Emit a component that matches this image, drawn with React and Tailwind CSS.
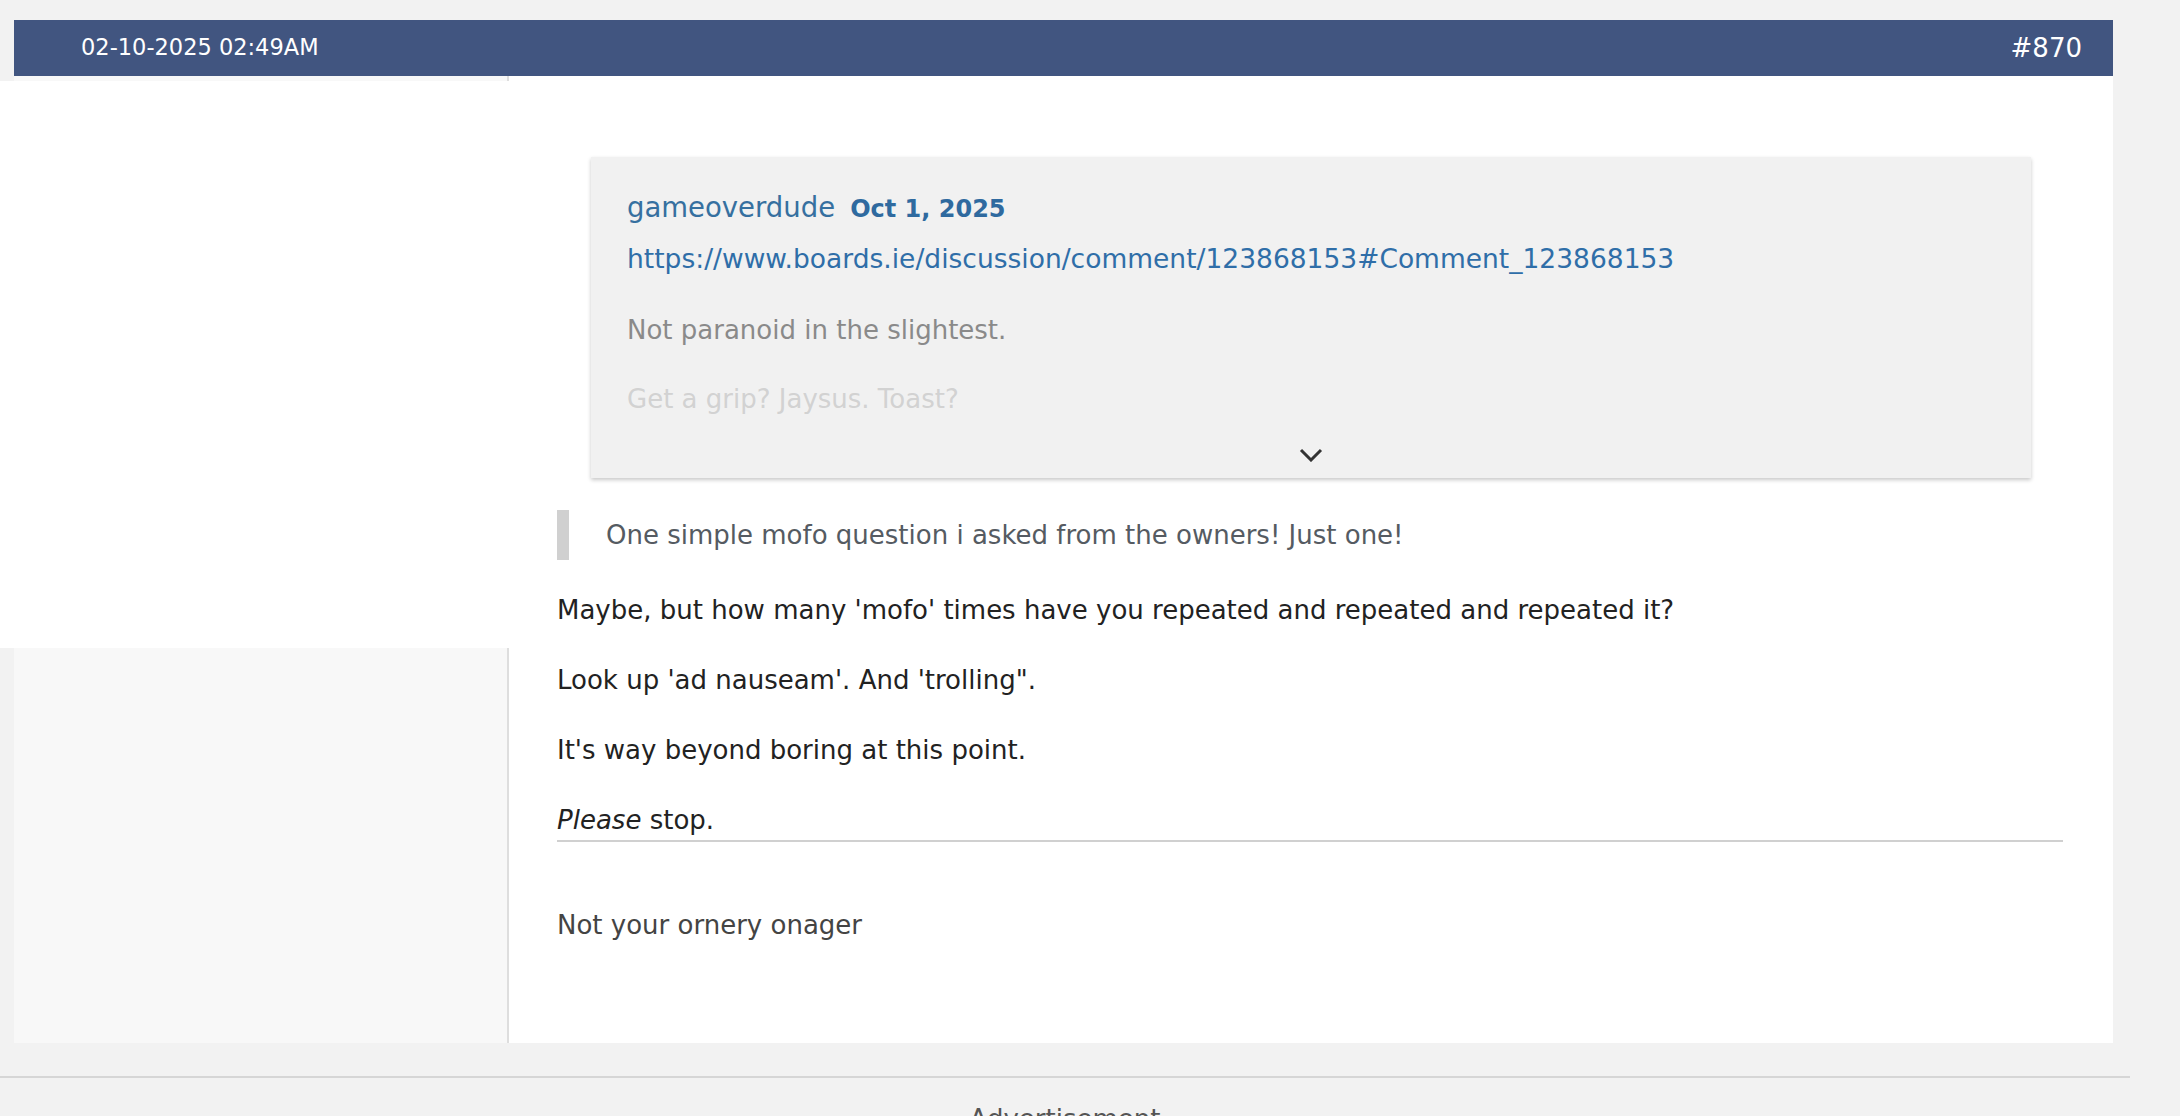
export default function App() {
  return (
    <div className="relative h-[1116px] overflow-hidden bg-[#f2f2f2] pt-[20px] font-['DejaVu_Sans',Verdana,sans-serif]">
      <div className="ml-[14px] w-[2099px]">
        <div className="flex h-[56px] items-center justify-between bg-[#415580] pl-[67px] pr-[31px] text-white">
          <span className="text-[22.5px]">02-10-2025 02:49AM</span>
          <span className="text-[26px]">#870</span>
        </div>
        <div className="flex">
          <div className="w-[495px] shrink-0 border-r-2 border-[#dedede] bg-[#f8f8f8]" />
          <div className="flex-1 bg-white pb-[100px] pl-[48px] pr-[50px] pt-[81px] text-[26px] leading-[36px]">
            <div className="ml-[34px] mr-[32px] bg-[#f1f1f1] px-[36px] pb-[16px] pt-[32px] shadow-[0_2px_4px_rgba(0,0,0,0.22)]">
              <div className="flex items-baseline">
                <span className="text-[27.5px] text-[#3670a0]">gameoverdude</span>
                <span className="ml-[15px] text-[24px] font-bold text-[#2f6a9f]">Oct 1, 2025</span>
              </div>
              <div className="mt-[14px] text-[26.5px] text-[#2f6ea8]">https://www.boards.ie/discussion/comment/123868153#Comment_123868153</div>
              <div className="mt-[35px] text-[#8a8a8a]">Not paranoid in the slightest.</div>
              <div className="mt-[33px] text-[#d2d2d2]">Get a grip? Jaysus. Toast?</div>
              <div className="mt-[31px] flex justify-center">
                <svg width="24" height="14" viewBox="0 0 24 14" fill="none">
                  <polyline points="2,2 12,12 22,2" stroke="#333" strokeWidth="3" />
                </svg>
              </div>
            </div>
            <div className="mt-[32px] flex h-[50px] items-center">
              <div className="h-[50px] w-[12px] bg-[#d0d0d0]" />
              <div className="ml-[37px] text-[#555b62]">One simple mofo question i asked from the owners! Just one!</div>
            </div>
            <div className="mt-[32px] text-[#222]">
              <p className="mb-[34px]">Maybe, but how many 'mofo' times have you repeated and repeated and repeated it?</p>
              <p className="mb-[34px]">Look up 'ad nauseam'. And 'trolling".</p>
              <p className="mb-[34px]">It's way beyond boring at this point.</p>
              <p><em>Please</em> stop.</p>
            </div>
            <div className="mt-[2px] h-[2px] bg-[#d0d0d0]" />
            <div className="mt-[65px] text-[#444]">Not your ornery onager</div>
          </div>
        </div>
      </div>
      <div className="mt-[33px] h-[2px] w-[2130px] bg-[#d6d6d6]" />
      <div className="mt-[22px] w-[2130px] text-center text-[26px] text-[#555]">Advertisement</div>
      <div className="absolute left-0 top-[81px] h-[567px] w-[509px] bg-white" />
    </div>
  );
}
